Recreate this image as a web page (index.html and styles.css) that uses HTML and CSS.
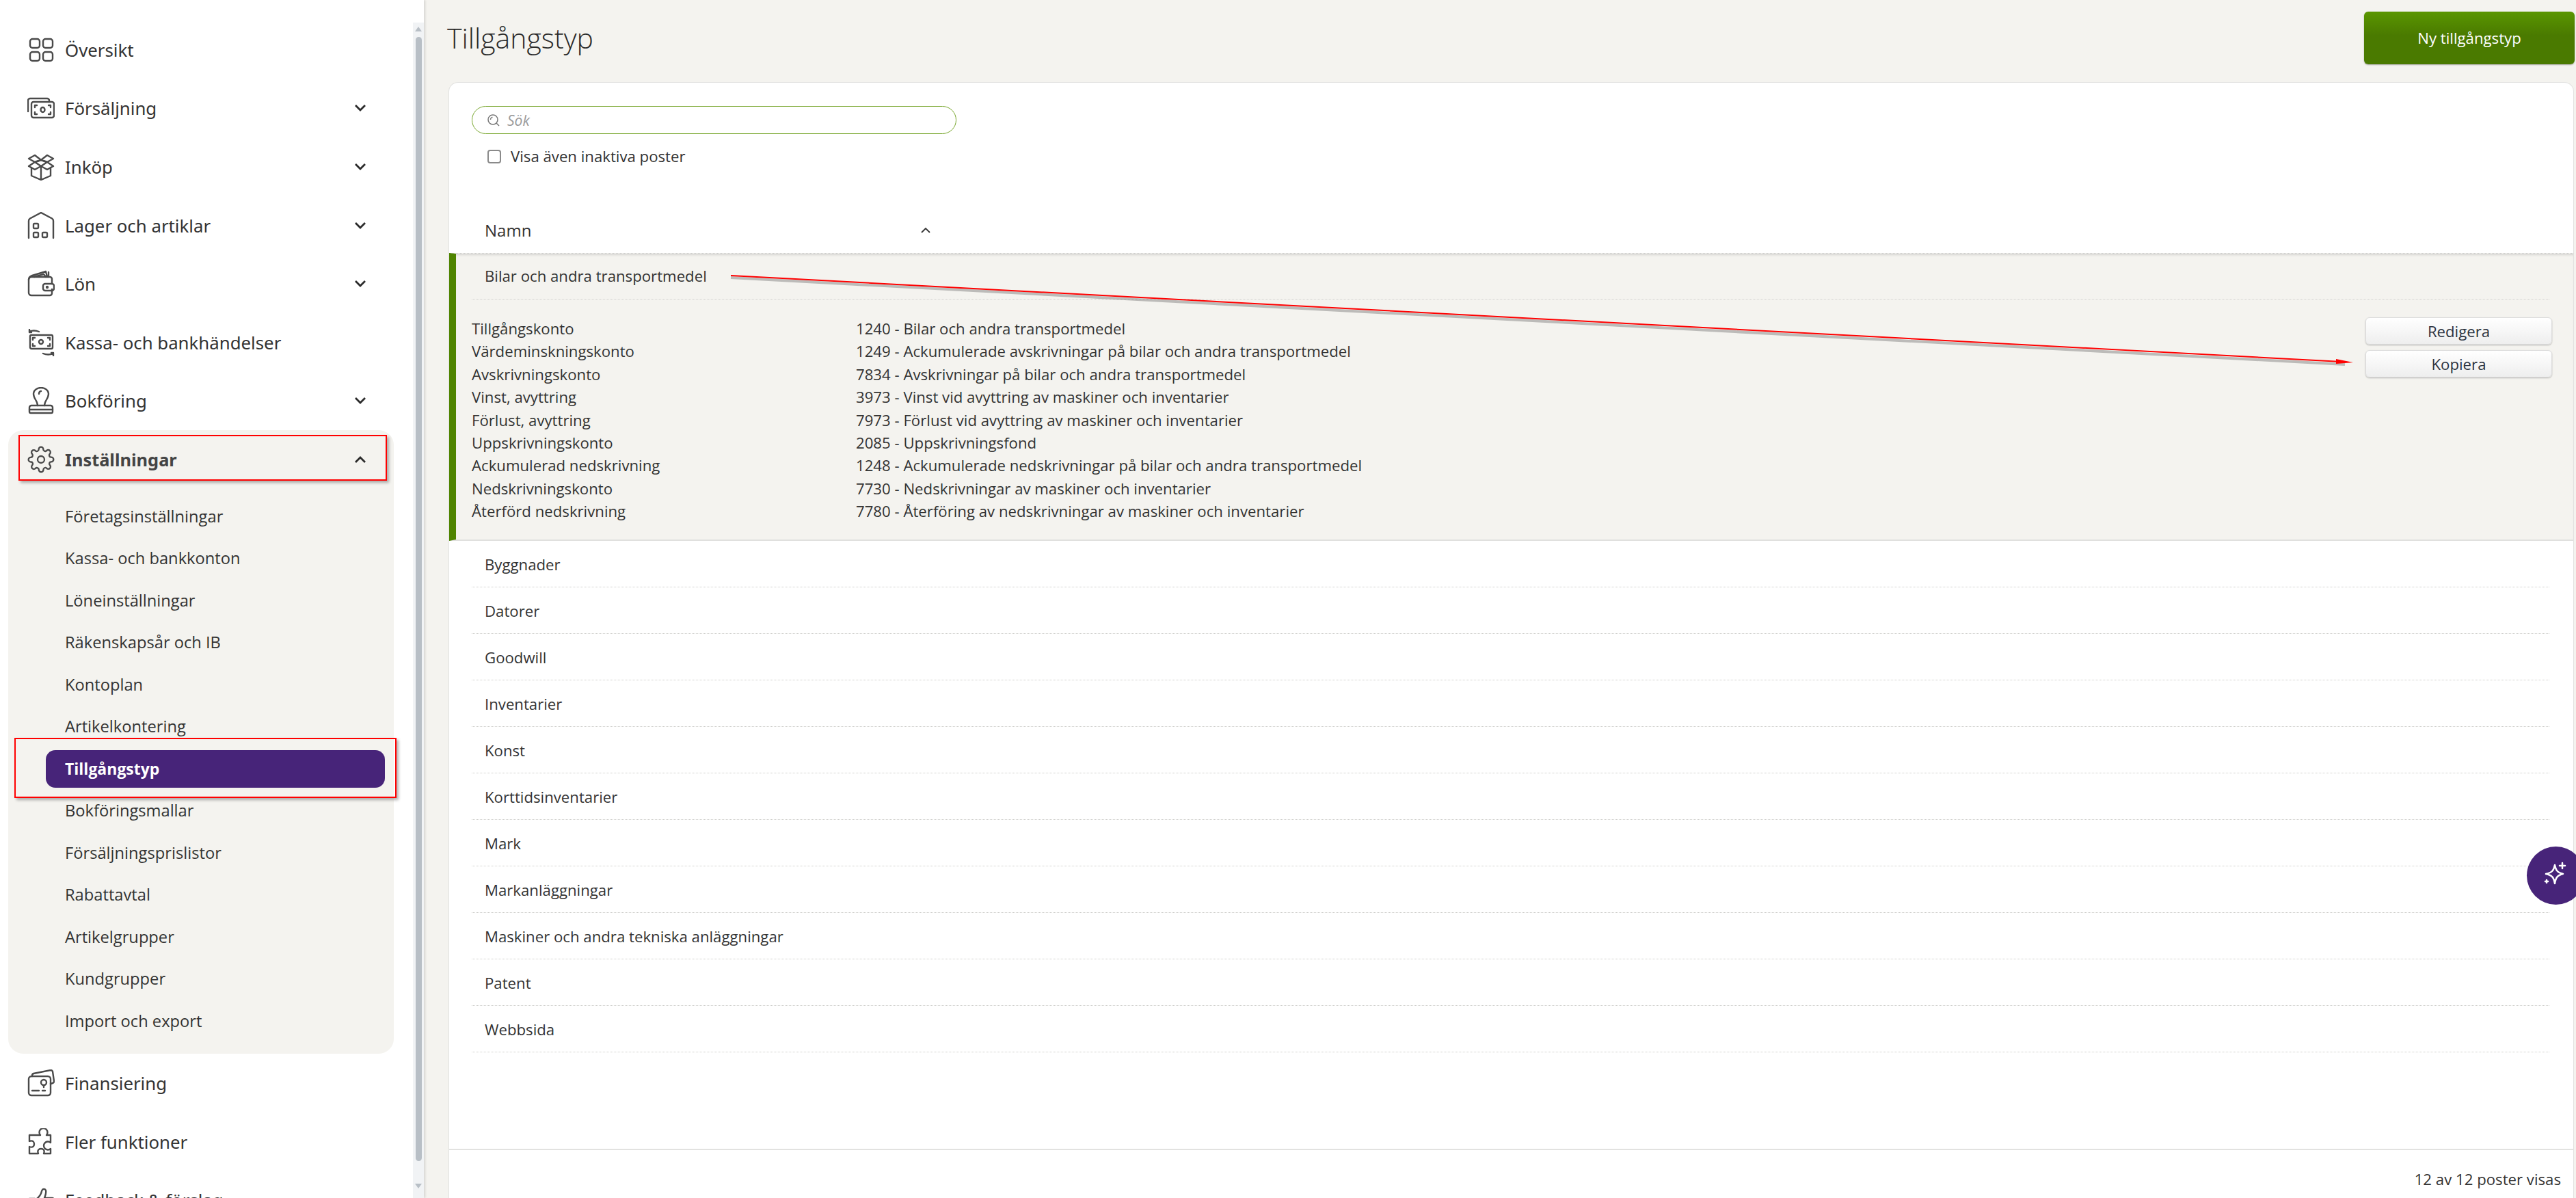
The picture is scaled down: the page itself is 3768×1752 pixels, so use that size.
FILE: index.html
```html
<!DOCTYPE html>
<html lang="sv">
<head>
<meta charset="utf-8">
<title>Tillgångstyp</title>
<link rel="stylesheet" href="styles.css">
</head>
<body>
<div class="app">
  <aside class="sidebar">
    <nav class="nav">
      <a class="nav-item">
        <svg class="nav-icon" viewBox="0 0 40 40"><rect x="4" y="4" width="14" height="13" rx="3.5"/><rect x="23" y="4" width="14" height="13" rx="3.5"/><rect x="4" y="23" width="14" height="13" rx="3.5"/><rect x="23" y="23" width="14" height="13" rx="3.5"/></svg>
        <span class="nav-label">Översikt</span>
      </a>
      <a class="nav-item">
        <svg class="nav-icon" viewBox="0 0 40 40"><path d="M1 25V9a3 3 0 0 1 3-3h25a3 3 0 0 1 3 3v2"/><rect x="6" y="11" width="33" height="23" rx="3"/><ellipse cx="22.500" cy="22.500" rx="3" ry="3.500"/><path d="M11 19v-3h3M34 19v-3h-3M11 26v3h3M34 26v3h-3"/></svg>
        <span class="nav-label">Försäljning</span>
        <svg class="chev" viewBox="0 0 20 12"><path d="M3 2l7 7 7-7"/></svg>
      </a>
      <a class="nav-item">
        <svg class="nav-icon" viewBox="0 0 40 40"><path d="M20 10L11 3 2 8l9 5zM20 10l9-7 9 5-9 5z"/><path d="M11 13l9-3 9 3-9 6zM11 13l-9 6 9 5 9-5 9 5 9-5-9-6"/><path d="M6 21v12l14 6 14-6V21M20 19v20"/></svg>
        <span class="nav-label">Inköp</span>
        <svg class="chev" viewBox="0 0 20 12"><path d="M3 2l7 7 7-7"/></svg>
      </a>
      <a class="nav-item">
        <svg class="nav-icon" viewBox="0 0 40 40"><path d="M2 38V13a4 4 0 0 1 2-3.500L20 1l16 8.500a4 4 0 0 1 2 3.500v25"/><rect x="9" y="17" width="7" height="7" rx="1.500"/><rect x="9" y="30" width="7" height="7" rx="1.500"/><rect x="22" y="30" width="7" height="7" rx="1.500"/></svg>
        <span class="nav-label">Lager och artiklar</span>
        <svg class="chev" viewBox="0 0 20 12"><path d="M3 2l7 7 7-7"/></svg>
      </a>
      <a class="nav-item">
        <svg class="nav-icon" viewBox="0 0 40 40"><path d="M36 20v-7a3 3 0 0 0-3-3H6a4 4 0 0 0-4 4v19a4 4 0 0 0 4 4h27a3 3 0 0 0 3-3v-6"/><path d="M2 14c0-3 2-5 5-6l20-6 2 8M10 10l14-4 3 4M31 10V3"/><rect x="23" y="20" width="16" height="10" rx="3"/><circle cx="29" cy="25" r="1"/></svg>
        <span class="nav-label">Lön</span>
        <svg class="chev" viewBox="0 0 20 12"><path d="M3 2l7 7 7-7"/></svg>
      </a>
      <a class="nav-item">
        <svg class="nav-icon" viewBox="0 0 40 40"><rect x="4" y="9" width="33" height="20" rx="2"/><circle cx="20" cy="19" r="3"/><path d="M8 16v-3h3M33 16v-3h-3M8 22v3h3M33 22v3h-3M17 4C12 2 7 2 3 4M3 1v4h3M23 36c5 2 10 2 15 0M38 39v-4h-3"/></svg>
        <span class="nav-label">Kassa- och bankhändelser</span>
      </a>
      <a class="nav-item">
        <svg class="nav-icon" viewBox="0 0 40 40"><path d="M15 27c0-7-6-10-6-17a11 9 0 0 1 22 0c0 7-6 10-6 17z"/><path d="M17 10c0-2 1-4 3-4"/><path d="M15 27H6a3 3 0 0 0-3 3v3h34v-3a3 3 0 0 0-3-3h-9"/><path d="M3 33v3a2 2 0 0 0 2 2h30a2 2 0 0 0 2-2v-3"/></svg>
        <span class="nav-label">Bokföring</span>
        <svg class="chev" viewBox="0 0 20 12"><path d="M3 2l7 7 7-7"/></svg>
      </a>
      <section class="panel">
        <a class="nav-item">
          <svg class="nav-icon gear" viewBox="0 0 24 24"><circle cx="12" cy="12" r="3"/><path d="M19.400 15a1.650 1.650 0 0 0 .33 1.820l.06.06a2 2 0 0 1 0 2.830 2 2 0 0 1-2.830 0l-.06-.06a1.650 1.650 0 0 0-1.820-.33 1.650 1.650 0 0 0-1 1.510V21a2 2 0 0 1-2 2 2 2 0 0 1-2-2v-.09A1.650 1.650 0 0 0 9 19.400a1.650 1.650 0 0 0-1.820.33l-.06.06a2 2 0 0 1-2.830 0 2 2 0 0 1 0-2.830l.06-.06a1.650 1.650 0 0 0 .33-1.820 1.650 1.650 0 0 0-1.510-1H3a2 2 0 0 1-2-2 2 2 0 0 1 2-2h.09A1.650 1.650 0 0 0 4.600 9a1.650 1.650 0 0 0-.33-1.820l-.06-.06a2 2 0 0 1 0-2.830 2 2 0 0 1 2.830 0l.06.06a1.650 1.650 0 0 0 1.820.33H9a1.650 1.650 0 0 0 1-1.510V3a2 2 0 0 1 2-2 2 2 0 0 1 2 2v.09a1.650 1.650 0 0 0 1 1.510 1.650 1.650 0 0 0 1.820-.33l.06-.06a2 2 0 0 1 2.830 0 2 2 0 0 1 0 2.830l-.06.06a1.650 1.650 0 0 0-.33 1.820V9a1.650 1.650 0 0 0 1.510 1H21a2 2 0 0 1 2 2 2 2 0 0 1-2 2h-.09a1.650 1.650 0 0 0-1.510 1z"/></svg>
          <span class="nav-label strong">Inställningar</span>
          <svg class="chev" viewBox="0 0 20 12"><path d="M3 10l7-7 7 7"/></svg>
        </a>
        <ul class="sub">
          <li class="sub-item">Företagsinställningar</li>
          <li class="sub-item">Kassa- och bankkonton</li>
          <li class="sub-item">Löneinställningar</li>
          <li class="sub-item">Räkenskapsår och IB</li>
          <li class="sub-item">Kontoplan</li>
          <li class="sub-item">Artikelkontering</li>
          <li class="sub-item active"><span class="pill">Tillgångstyp</span></li>
          <li class="sub-item">Bokföringsmallar</li>
          <li class="sub-item">Försäljningsprislistor</li>
          <li class="sub-item">Rabattavtal</li>
          <li class="sub-item">Artikelgrupper</li>
          <li class="sub-item">Kundgrupper</li>
          <li class="sub-item">Import och export</li>
        </ul>
      </section>
      <a class="nav-item">
        <svg class="nav-icon" viewBox="0 0 40 40"><rect x="2" y="10" width="32" height="28" rx="4"/><path d="M7 10V9a3 3 0 0 1 2-3l25-5a3 3 0 0 1 3 2l2 14a3 3 0 0 1-2 3l-3 1"/><circle cx="24" cy="19" r="4"/><path d="M24 23v3M7 31h10M22 31h4"/></svg>
        <span class="nav-label">Finansiering</span>
      </a>
      <a class="nav-item">
        <svg class="nav-icon" viewBox="0 0 40 40"><path d="M14 10h5a6 6 0 1 1 9 0h6v11a6 6 0 1 0 0 9v7H24c2-5-1-7-4-7s-6 2-4 7H3V27c5 2 7-1 7-4s-2-6-7-4V10z"/></svg>
        <span class="nav-label">Fler funktioner</span>
      </a>
      <a class="nav-item">
        <svg class="nav-icon" viewBox="0 0 40 40"><path d="M3 18h8v20H3zM11 20c5-3 9-8 10-13 1-4 5-4 6-1 1 4-1 8-2 11h11a3 3 0 0 1 3 4l-3 14a3 3 0 0 1-3 3H11"/></svg>
        <span class="nav-label">Feedback &amp; förslag</span>
      </a>
    </nav>
    <div class="rail">
      <span class="rail-arrow up"></span>
      <span class="rail-thumb"></span>
      <span class="rail-arrow down"></span>
    </div>
  </aside>

  <main class="main">
    <header class="topbar">
      <h1 class="title">Tillgångstyp</h1>
      <button class="btn-primary">Ny tillgångstyp</button>
    </header>

    <section class="card">
      <div class="filters">
        <div class="search">
          <svg class="search-icon" viewBox="0 0 20 20"><circle cx="9" cy="9" r="7"/><path d="M14 14l4 4M5.500 9c0-2 1.500-3.500 3-3.500"/></svg>
          <span class="search-text">Sök</span>
        </div>
        <label class="check"><span class="box"></span><span>Visa även inaktiva poster</span></label>
      </div>

      <div class="thead">
        <span class="th">Namn</span>
        <svg class="sort" viewBox="0 0 16 10"><path d="M2 8l6-6 6 6"/></svg>
      </div>

      <div class="list">
        <article class="row-open">
          <div class="row-open-title">Bilar och andra transportmedel</div>
          <div class="row-open-body">
            <dl class="details">
              <dt>Tillgångskonto</dt><dd>1240 - Bilar och andra transportmedel</dd>
              <dt>Värdeminskningskonto</dt><dd>1249 - Ackumulerade avskrivningar på bilar och andra transportmedel</dd>
              <dt>Avskrivningskonto</dt><dd>7834 - Avskrivningar på bilar och andra transportmedel</dd>
              <dt>Vinst, avyttring</dt><dd>3973 - Vinst vid avyttring av maskiner och inventarier</dd>
              <dt>Förlust, avyttring</dt><dd>7973 - Förlust vid avyttring av maskiner och inventarier</dd>
              <dt>Uppskrivningskonto</dt><dd>2085 - Uppskrivningsfond</dd>
              <dt>Ackumulerad nedskrivning</dt><dd>1248 - Ackumulerade nedskrivningar på bilar och andra transportmedel</dd>
              <dt>Nedskrivningskonto</dt><dd>7730 - Nedskrivningar av maskiner och inventarier</dd>
              <dt>Återförd nedskrivning</dt><dd>7780 - Återföring av nedskrivningar av maskiner och inventarier</dd>
            </dl>
            <div class="actions">
              <button class="btn">Redigera</button>
              <button class="btn">Kopiera</button>
            </div>
          </div>
        </article>
        <div class="row">Byggnader</div>
        <div class="row">Datorer</div>
        <div class="row">Goodwill</div>
        <div class="row">Inventarier</div>
        <div class="row">Konst</div>
        <div class="row">Korttidsinventarier</div>
        <div class="row">Mark</div>
        <div class="row">Markanläggningar</div>
        <div class="row">Maskiner och andra tekniska anläggningar</div>
        <div class="row">Patent</div>
        <div class="row">Webbsida</div>
      </div>

      <footer class="card-foot">12 av 12 poster visas</footer>
    </section>
  </main>
</div>

<button class="fab" aria-label="AI">
  <svg viewBox="0 0 40 40"><path d="M19 5c1.500 8 4 11 12 13-8 2-10.500 5-12 14-1.500-9-4-12-13-14 9-2 11.500-5 13-13z"/><path d="M30 2v8M26 6h8M7 27v4M5 29h4"/></svg>
</button>

<div class="mark mark-settings"></div>
<div class="mark mark-active"></div>
<svg class="arrow" viewBox="0 0 3768 1752">
  <path class="arrow-shadow" d="M1069 406L3430 533"/>
  <path class="arrow-line" d="M1069 403L3425 529"/>
  <path class="arrow-head" d="M3442 530L3417 525L3417 532Z"/>
</svg>
</body>
</html>
```
FILE: styles.css
```css
* { box-sizing: border-box; }
html, body { margin: 0; height: 100%; overflow: hidden; }
body { font-family: "Open Sans", "Liberation Sans", sans-serif; color: #333; background: #f4f3ef; font-size: 22.2px; }
.app { display: flex; height: 1752px; overflow: hidden; }

/* sidebar */
.sidebar { width: 620px; flex: none; display: flex; background: #fff; box-shadow: 2px 0 3px rgba(0,0,0,.12); position: relative; overflow: hidden; }
.nav { width: 576px; flex: none; padding: 30px 0 0 12px; margin-right: 28px; }
.nav-item { display: flex; align-items: center; height: 85.6px; padding-left: 28px; color: #333; }
.nav-icon { width: 40px; height: 40px; flex: none; fill: none; stroke: #4a4a4a; stroke-width: 2.4; stroke-linecap: round; stroke-linejoin: round; }
.nav-icon.gear { stroke-width: 1.4; }
.nav-label { margin-left: 15px; font-family: "Noto Sans", sans-serif; font-size: 25.800px; flex: 1; white-space: nowrap; }
.nav-label.strong { font-weight: 700; font-size: 25.400px; color: #444; }
.chev { width: 20px; height: 12px; flex: none; margin-right: 39px; fill: none; stroke: #2b2b2b; stroke-width: 2.8; }
.panel { background: #f4f3ef; border-radius: 22px; width: 564px; padding-bottom: 17px; }
.sub { list-style: none; margin: 10px 0 0; padding: 0; }
.sub-item { height: 61.5px; line-height: 61.5px; padding-left: 83px; font-size: 23.700px; white-space: nowrap; }
.sub-item.active { padding-left: 55px; padding-right: 13px; display: flex; align-items: center; }
.pill { display: block; width: 100%; height: 55px; line-height: 55px; padding-left: 28px; background: #472479; color: #fff; font-weight: 700; font-size: 23px; border-radius: 14px; }
.rail { width: 16px; flex: none; margin-top: 33px; background: #f1f3f5; position: relative; display: flex; flex-direction: column; align-items: center; }
.rail-arrow { width: 0; height: 0; border-left: 5px solid transparent; border-right: 5px solid transparent; }
.rail-arrow.up { border-bottom: 7px solid #b8bfc6; margin-top: 6px; }
.rail-arrow.down { border-top: 7px solid #b8bfc6; margin-top: 33px; }
.rail-thumb { display: block; width: 9px; height: 1644px; margin-top: 8px; background: #b8bfc6; border-radius: 5px; }

/* main */
.main { flex: 1; min-width: 0; padding-left: 36px; padding-right: 3px; background: #f4f3ef; display: flex; flex-direction: column; }
.topbar { height: 120px; flex: none; display: flex; align-items: flex-start; justify-content: space-between; }
.title { margin: 25px 0 0 -2px; font-size: 41px; font-weight: 300; line-height: 60px; color: #2a2a2a; }
.btn-primary { width: 308px; height: 77px; margin: 17px -1px 0 0; font: 400 22.2px "Open Sans", sans-serif; color: #fff; border: 0; border-radius: 6px; background: linear-gradient(#5a9600, #4a7a00 45%, #4a7a00); box-shadow: 0 1px 2px rgba(0,0,0,.3); }
.card { flex: 1; background: #fff; border: 1px solid #e2e2e0; border-bottom: 0; border-radius: 14px 14px 0 0; display: flex; flex-direction: column; min-height: 0; }
.filters { padding: 34px 0 0 33px; height: 196px; flex: none; }
.search { width: 709px; height: 41px; border: 1.500px solid #76a52a; border-radius: 21px; display: flex; align-items: center; padding-left: 21px; }
.search-icon { width: 20px; height: 20px; fill: none; stroke: #777; stroke-width: 1.500; }
.search-text { margin-left: 10px; font-style: italic; color: #9a9a9a; font-size: 21px; }
.check { display: flex; align-items: center; margin: 17px 0 0 23px; gap: 14px; }
.box { width: 20px; height: 20px; border: 2px solid #8a8a8a; border-radius: 4px; background: #fff; }
.thead { height: 53px; flex: none; margin: 0 35px 0 33px; padding: 0 0 14px 19px; display: flex; align-items: center; position: relative; }
.th { font-size: 24px; font-weight: 500; color: #333; width: 637px; }
.sort { width: 16px; height: 10px; fill: none; stroke: #333; stroke-width: 1.800; }
.list { flex: 1; padding-top: 0; }
.row-open { height: 421px; background: #f4f3ef; border-left: 10px solid #4f8400; border-bottom: 2px solid #e0e0de; margin-top: 0; box-shadow: inset 0 4px 4px -3px rgba(0,0,0,.18); border-top: 1px dotted #ccc; }
.row-open-title { height: 67px; margin: 0 35px 0 23px; padding-left: 19px; line-height: 66px; border-bottom: 1px dotted #cfcfcc; }
.row-open-body { display: flex; justify-content: space-between; padding: 26px 31px 0 23px; }
.details { display: grid; grid-template-columns: 562px 1fr; grid-auto-rows: 33.4px; margin: 0; line-height: 33.4px; }
.details dt, .details dd { margin: 0; white-space: nowrap; }
.actions { display: flex; flex-direction: column; gap: 8px; }
.btn { width: 273px; height: 40px; font: 400 22.2px "Open Sans", sans-serif; color: #2c3340; border: 1px solid #dcdcdc; border-radius: 6px; background: linear-gradient(#fff, #eeeeee); box-shadow: 0 1px 2px rgba(0,0,0,.25); }
.row { height: 68px; margin: 0 35px 0 33px; padding-left: 19px; line-height: 69px; border-bottom: 1px dotted #cfcfcc; }
.card-foot { height: 72px; flex: none; border-top: 2px solid #e2e2e0; text-align: right; padding: 26px 18px 0 0; line-height: 34px; }

/* overlays */
.fab { position: absolute; left: 3696px; top: 1238px; width: 85px; height: 85px; border-radius: 50%; border: 0; padding: 0; background: #472479; }
.fab svg { position: absolute; left: 22px; top: 22px; width: 40px; height: 40px; fill: none; stroke: #fff; stroke-width: 2.500; stroke-linejoin: round; stroke-linecap: round; }
.mark { position: absolute; border: 2px solid #f00; box-shadow: 3px 3px 4px rgba(0,0,0,.3); }
.mark-settings { left: 27px; top: 636px; width: 539px; height: 67px; }
.mark-active { left: 21px; top: 1079px; width: 559px; height: 88px; }
.arrow { position: absolute; left: 0; top: 0; width: 3768px; height: 1752px; pointer-events: none; }
.arrow-line { stroke: #f00; stroke-width: 2; fill: none; }
.arrow-shadow { stroke: rgba(60,60,60,.3); stroke-width: 4; fill: none; }
.arrow-head { fill: #f00; }
```
